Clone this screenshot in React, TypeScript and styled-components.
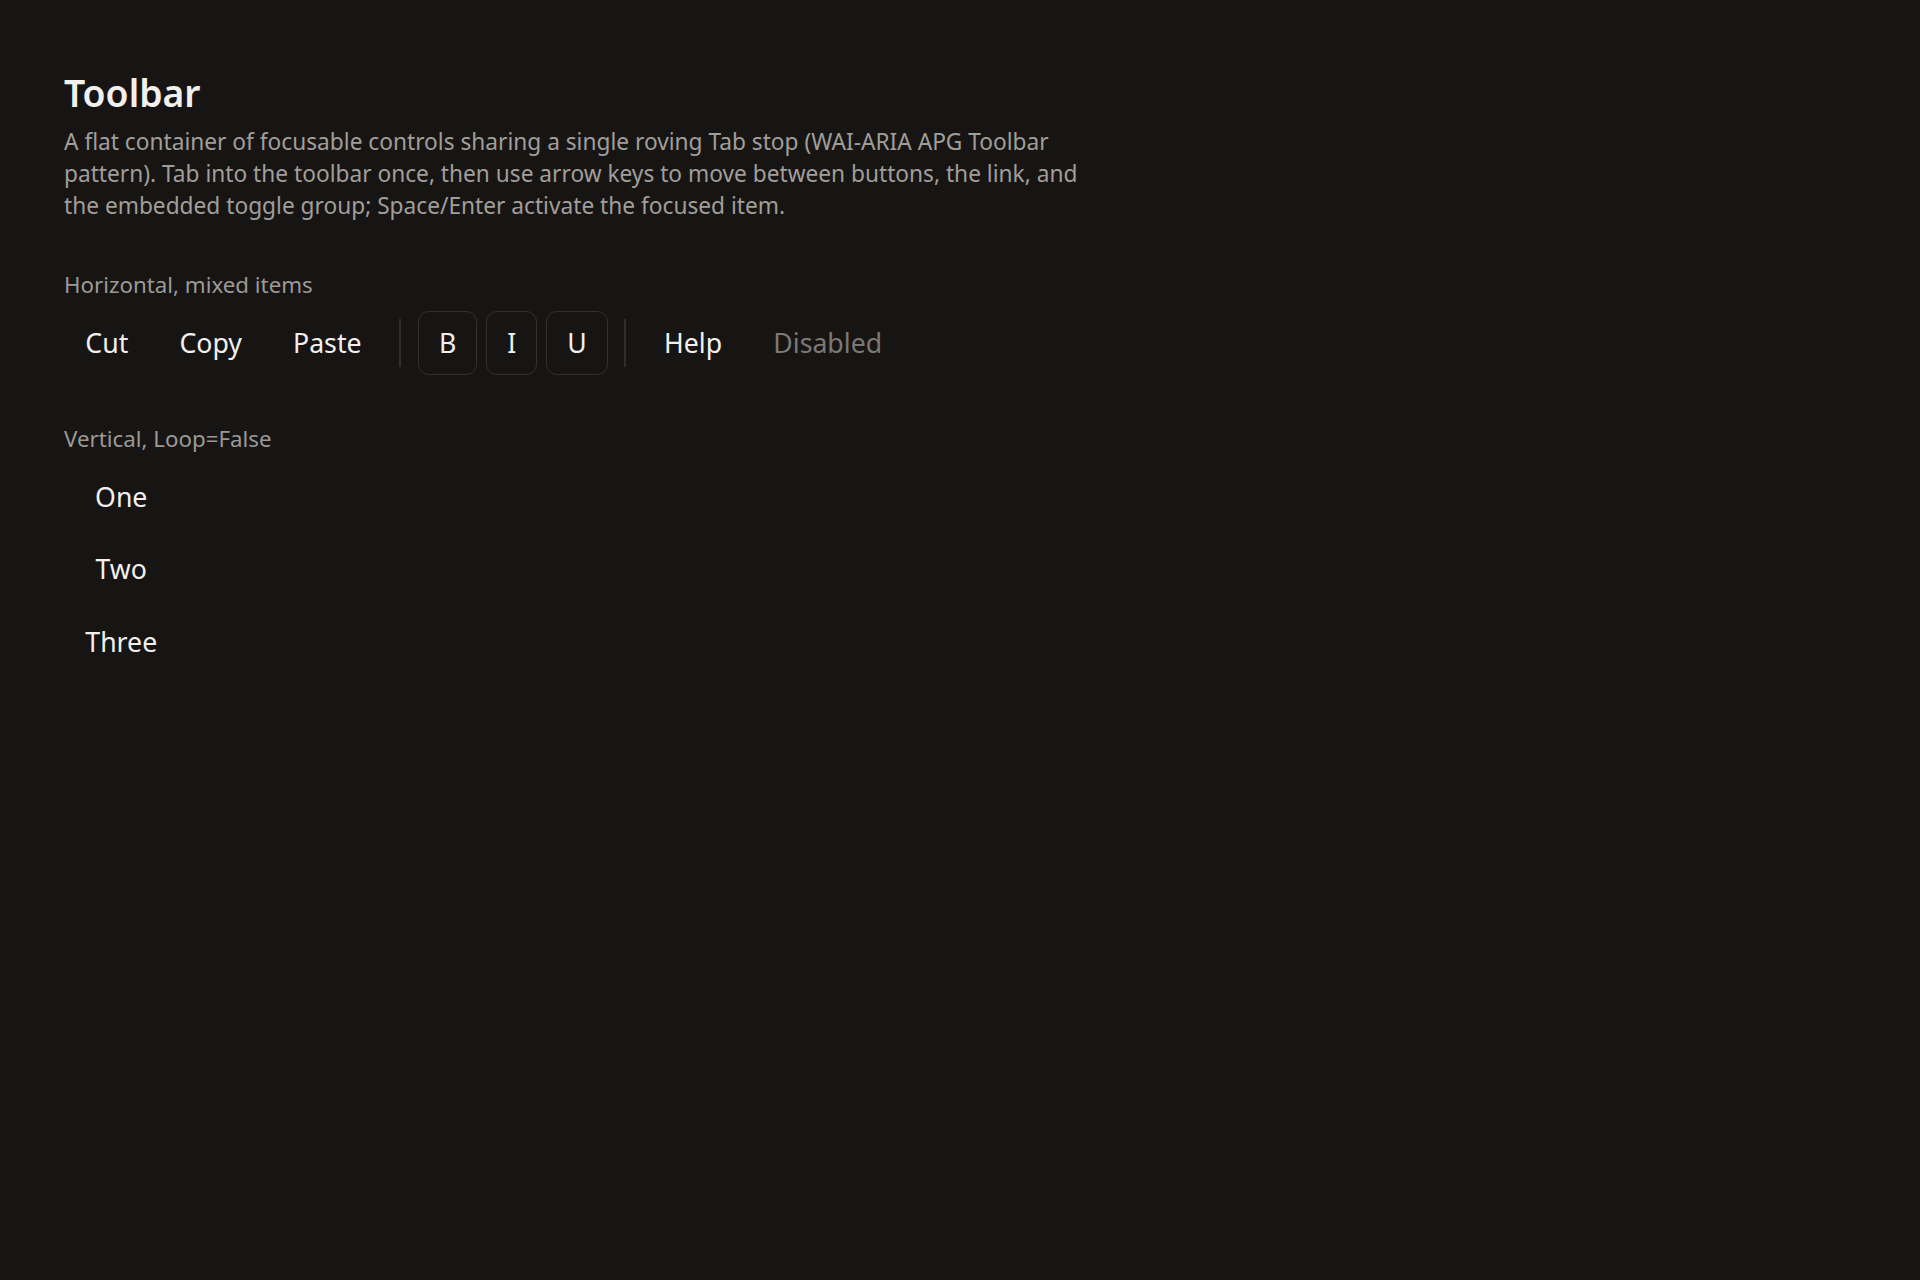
import React from 'react'
import styled, { createGlobalStyle } from 'styled-components'

const GlobalStyle = createGlobalStyle`
  html, body {
    margin: 0;
    padding: 0;
    background: #161514;
  }
  body {
    font-family: 'Segoe UI', 'Noto Sans', sans-serif;
    color: #f2f0ee;
    min-height: 1280px;
  }
`

const Page = styled.main`
  padding: 69px 64px;
`

const Title = styled.h1`
  font-size: 37.3px;
  font-weight: 600;
  line-height: 48px;
  margin: 0;
  color: #f2f0ee;
`

const Description = styled.p`
  max-width: 1030px;
  font-size: 22.7px;
  line-height: 32px;
  margin: 9px 0 0;
  color: #a19e9a;
`

const Section = styled.section<{ $first?: boolean }>`
  margin-top: ${(p) => (p.$first ? '47px' : '48px')};
`

const Label = styled.div`
  font-size: 22.3px;
  line-height: 32px;
  color: #9c9995;
  margin-bottom: 9.5px;
`

const Bar = styled.div<{ $vertical?: boolean }>`
  display: inline-flex;
  flex-direction: ${(p) => (p.$vertical ? 'column' : 'row')};
  align-items: ${(p) => (p.$vertical ? 'stretch' : 'center')};
  gap: ${(p) => (p.$vertical ? '8.5px' : '8.5px')};
`

const Item = styled.button`
  height: 64px;
  padding: 0 21.33px;
  border: 0;
  border-radius: 10.67px;
  background: transparent;
  font-family: inherit;
  font-size: 26.67px;
  color: ${(p) => (p.disabled ? '#7b7875' : '#f2f0ee')};
  cursor: ${(p) => (p.disabled ? 'default' : 'pointer')};
  text-align: center;
  text-decoration: none;
  display: inline-flex;
  align-items: center;
  justify-content: center;
`

const Separator = styled.div`
  width: 2px;
  height: 48px;
  margin: 0 8px;
  background: #2f2e2d;
`

const ToggleGroup = styled.div`
  display: flex;
  gap: 9px;
`

const Toggle = styled(Item)`
  border: 1.5px solid #333130;
  padding: 0 20px;
`

export default function App() {
  return (
    <>
      <GlobalStyle />
      <Page>
        <Title>Toolbar</Title>
        <Description>
          A flat container of focusable controls sharing a single roving Tab
          stop (WAI-ARIA APG Toolbar pattern). Tab into the toolbar once, then
          use arrow keys to move between buttons, the link, and the embedded
          toggle group; Space/Enter activate the focused item.
        </Description>

        <Section $first>
          <Label>Horizontal, mixed items</Label>
          <Bar role="toolbar" aria-label="Horizontal, mixed items">
            <Item>Cut</Item>
            <Item>Copy</Item>
            <Item>Paste</Item>
            <Separator role="separator" />
            <ToggleGroup>
              <Toggle aria-pressed="false">B</Toggle>
              <Toggle aria-pressed="false">I</Toggle>
              <Toggle aria-pressed="false">U</Toggle>
            </ToggleGroup>
            <Separator role="separator" />
            <Item as="a" href="#help">
              Help
            </Item>
            <Item disabled>Disabled</Item>
          </Bar>
        </Section>

        <Section>
          <Label>Vertical, Loop=False</Label>
          <Bar $vertical role="toolbar" aria-orientation="vertical">
            <Item>One</Item>
            <Item>Two</Item>
            <Item>Three</Item>
          </Bar>
        </Section>
      </Page>
    </>
  )
}
